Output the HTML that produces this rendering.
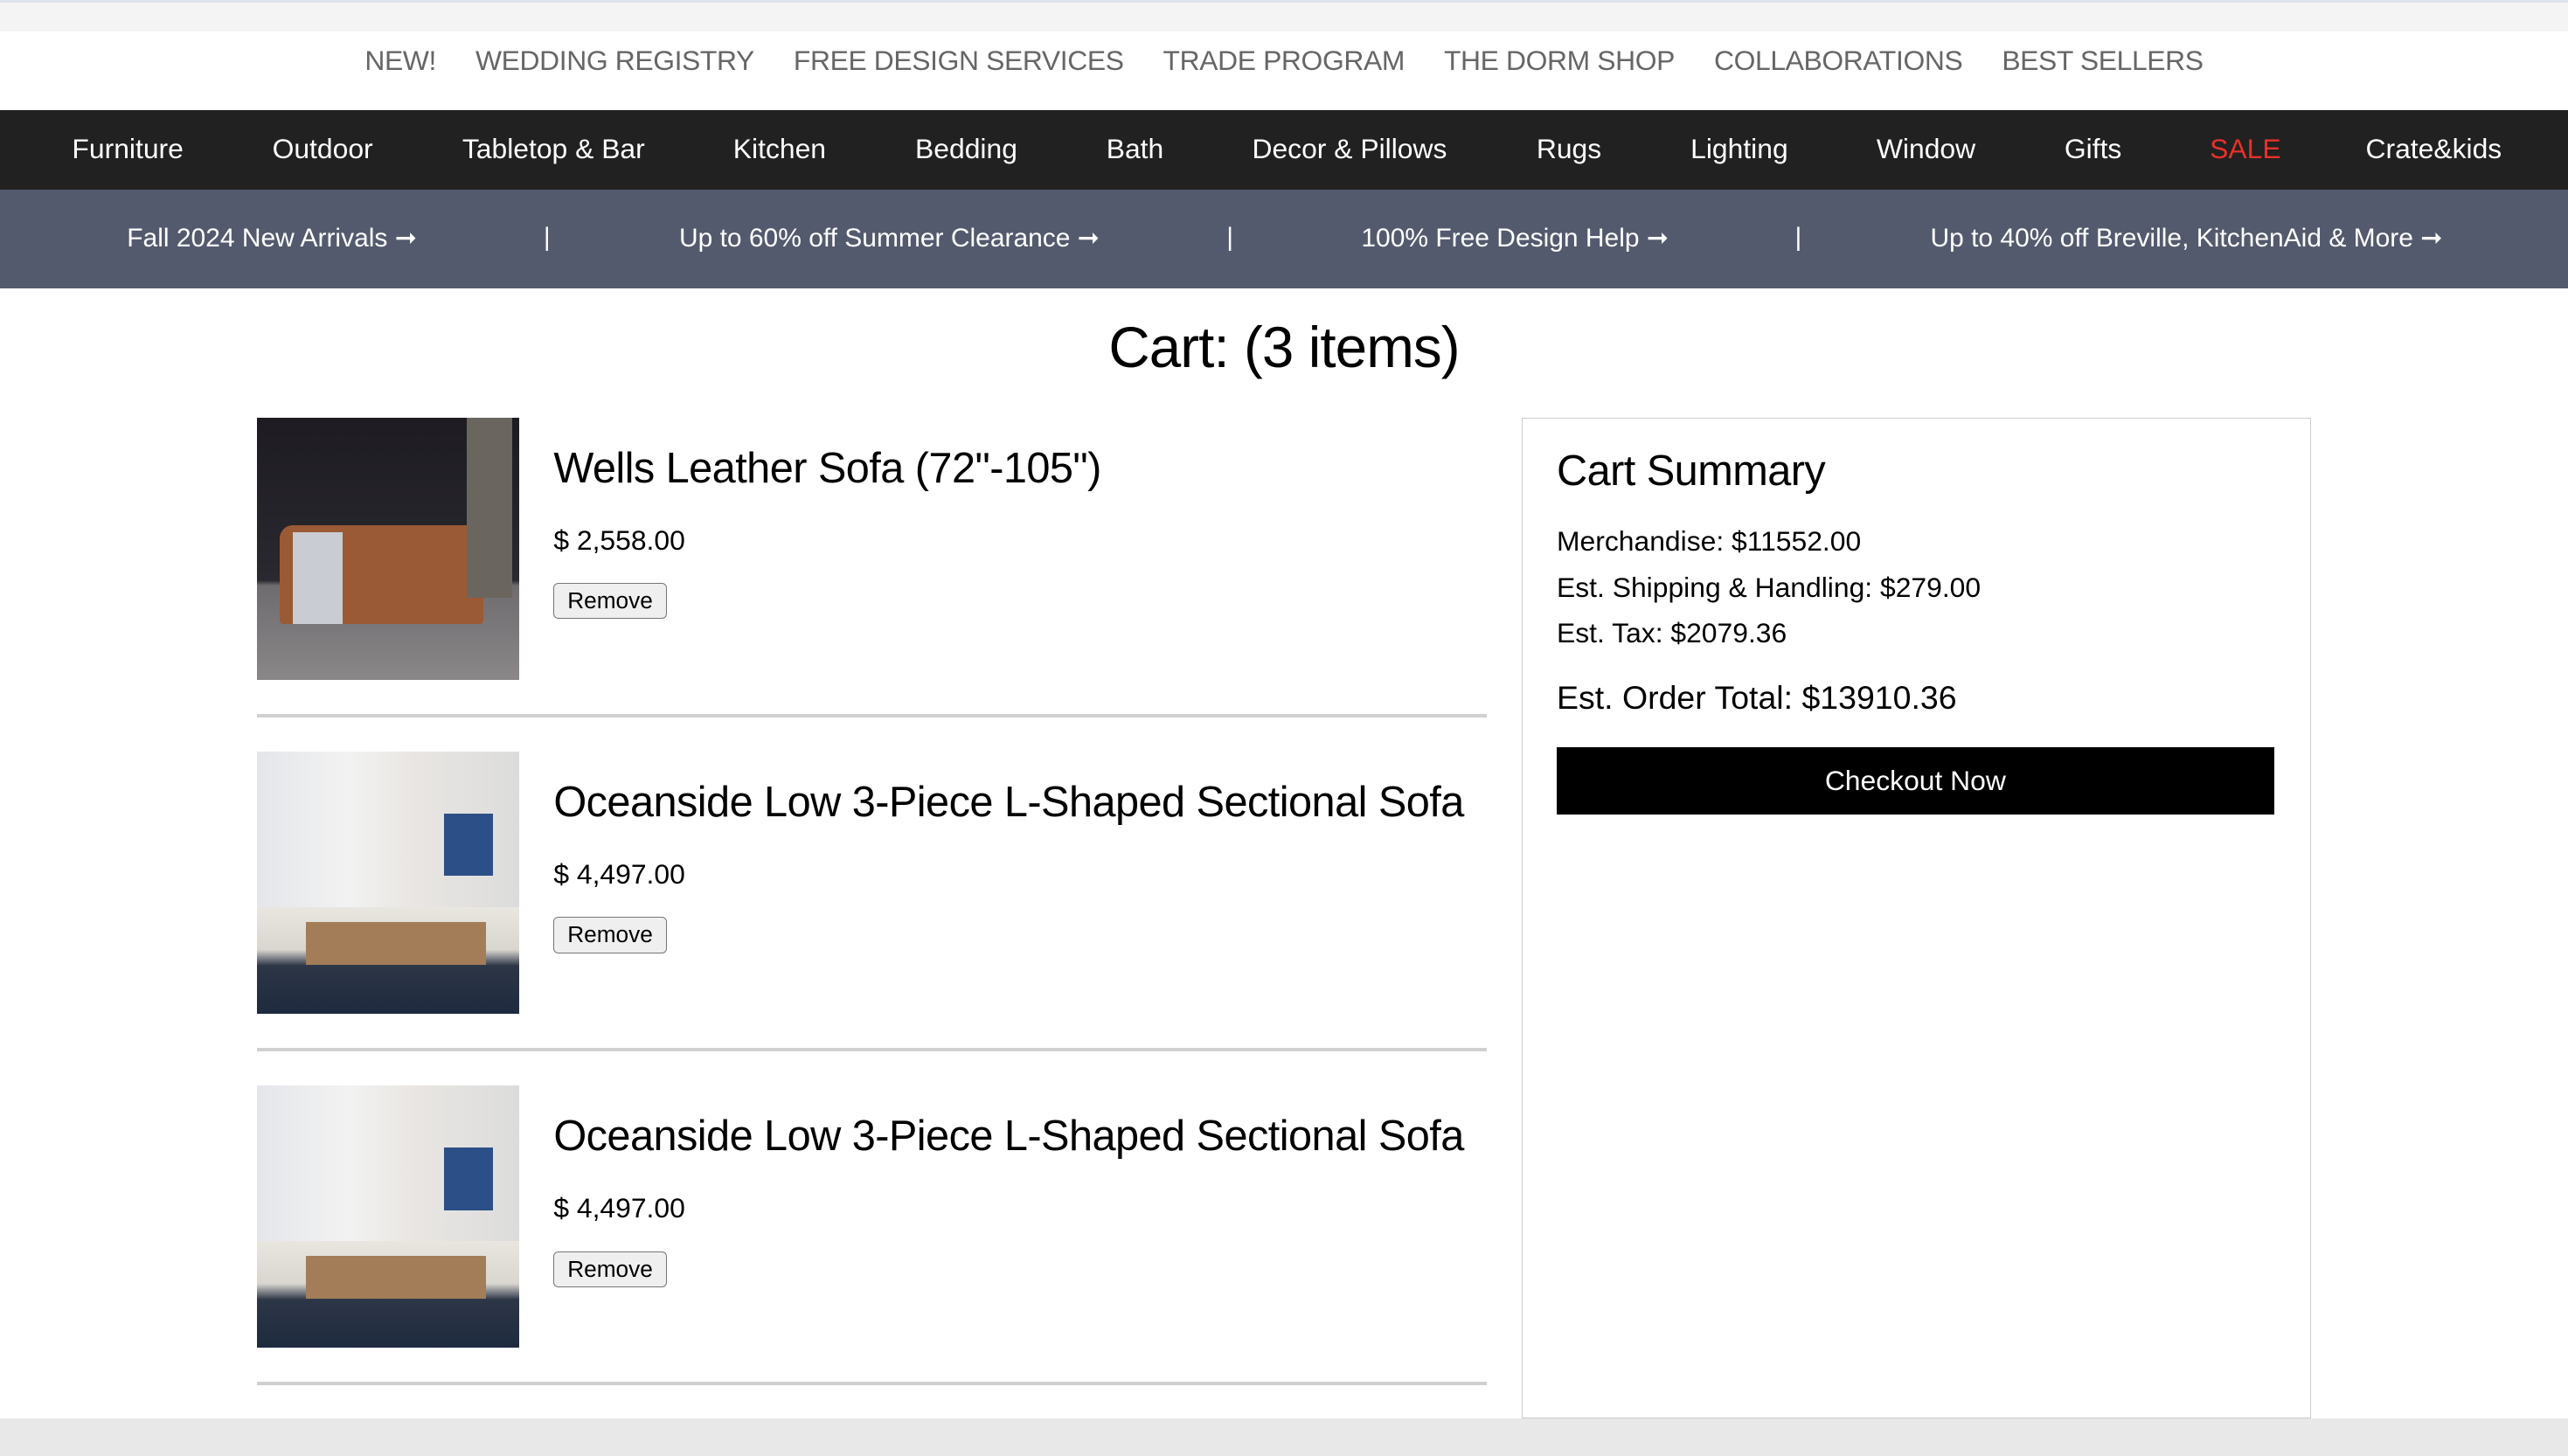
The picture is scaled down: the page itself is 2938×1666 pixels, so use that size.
<!DOCTYPE html>
<html><head><meta charset="utf-8"><style>
html,body{margin:0;padding:0;background:#fff;overflow:hidden}
body{width:2938px;height:1666px}
#w{zoom:1.87372;width:1568px;height:889px;position:relative;font-family:"Liberation Sans",Arial,sans-serif;color:#000}
.abs{position:absolute}
.top{top:0;left:0;width:1568px;height:19px;background:#f4f4f4;border-top:2px solid #dde3ea;box-sizing:border-box}
.util{top:13px;left:0;width:1568px;height:48px;display:flex;justify-content:center;align-items:center;gap:24px;font-size:17px;color:#666;letter-spacing:-0.2px}
.nav{top:67px;left:0;width:1568px;height:49px;background:#212121;color:#fff;font-size:17px}
.nav span{position:absolute;top:14px;transform:translateX(-50%);white-space:nowrap}
.promo{top:116px;left:0;width:1568px;height:60px;background:#545a6e;color:#fff;font-size:16px}
.promo span{position:absolute;top:20px;transform:translateX(-50%);white-space:nowrap}
h1{position:absolute;top:192px;left:0;width:1568px;text-align:center;margin:0;font-size:35px;font-weight:normal;letter-spacing:-0.5px}
.img{left:157px;width:160px;height:160px;overflow:hidden}
.t{left:338px;font-size:26px;letter-spacing:-0.3px;white-space:nowrap}
.p{left:338px;font-size:17px}
.btn{left:338px;width:68px;height:21px;border:1px solid #767676;border-radius:3px;background:#efefef;font-size:14px;text-align:center;line-height:21px}
.hr{left:157px;width:751px;height:2px;background:#d0d0d0}
.sum{left:929px;top:255px;width:481px;height:610px;border:1px solid #ccc}
.bot{left:0;top:866px;width:1568px;height:23px;background:#e8e8e8}
</style></head><body><div id="w">
<div class="abs top"></div>
<div class="abs util"><span>NEW!</span><span>WEDDING REGISTRY</span><span>FREE DESIGN SERVICES</span><span>TRADE PROGRAM</span><span>THE DORM SHOP</span><span>COLLABORATIONS</span><span>BEST SELLERS</span></div>
<div class="abs nav">
<span style="left:78px">Furniture</span><span style="left:197px">Outdoor</span><span style="left:338px">Tabletop &amp; Bar</span><span style="left:476px">Kitchen</span><span style="left:590px">Bedding</span><span style="left:693px">Bath</span><span style="left:824px">Decor &amp; Pillows</span><span style="left:958px">Rugs</span><span style="left:1062px">Lighting</span><span style="left:1176px">Window</span><span style="left:1278px">Gifts</span><span style="left:1371px;color:#e8312a">SALE</span><span style="left:1486px">Crate&amp;kids</span>
</div>
<div class="abs promo">
<span style="left:166px">Fall 2024 New Arrivals ➞</span><span style="left:334px">|</span><span style="left:543px">Up to 60% off Summer Clearance ➞</span><span style="left:751px">|</span><span style="left:925px">100% Free Design Help ➞</span><span style="left:1098px">|</span><span style="left:1335px">Up to 40% off Breville, KitchenAid &amp; More ➞</span>
</div>
<h1>Cart: (3 items)</h1>

<div class="abs img" style="top:255px;background:linear-gradient(180deg,#1e1c22 0%,#2a2830 62%,#6f6c70 64%,#8a8788 100%)">
<div class="abs" style="left:14px;top:66px;width:124px;height:60px;background:#9a5a35;border-radius:8px 8px 2px 2px"></div>
<div class="abs" style="left:22px;top:70px;width:30px;height:56px;background:#c9ccd2"></div>
<div class="abs" style="left:128px;top:0;width:28px;height:110px;background:#6b6560"></div>
</div>
<div class="abs t" style="top:271px">Wells Leather Sofa (72"-105")</div>
<div class="abs p" style="top:320px">$ 2,558.00</div>
<div class="abs btn" style="top:356px">Remove</div>
<div class="abs hr" style="top:436px"></div>

<div class="abs img" style="top:459px;background:linear-gradient(90deg,#e4e6ea 0%,#f2f2f2 35%,#e9e6e2 60%,#dcdcdc 100%)">
<div class="abs" style="left:114px;top:38px;width:30px;height:38px;background:#2b4f86"></div>
<div class="abs" style="left:0;top:95px;width:160px;height:65px;background:linear-gradient(180deg,#e9e6e0 0%,#d9d6d0 40%,#2d3647 55%,#1e2a3e 100%)"></div>
<div class="abs" style="left:30px;top:104px;width:110px;height:26px;background:#a27d58"></div>
</div>
<div class="abs t" style="top:475px">Oceanside Low 3-Piece L-Shaped Sectional Sofa</div>
<div class="abs p" style="top:524px">$ 4,497.00</div>
<div class="abs btn" style="top:560px">Remove</div>
<div class="abs hr" style="top:640px"></div>

<div class="abs img" style="top:663px;background:linear-gradient(90deg,#e4e6ea 0%,#f2f2f2 35%,#e9e6e2 60%,#dcdcdc 100%)">
<div class="abs" style="left:114px;top:38px;width:30px;height:38px;background:#2b4f86"></div>
<div class="abs" style="left:0;top:95px;width:160px;height:65px;background:linear-gradient(180deg,#e9e6e0 0%,#d9d6d0 40%,#2d3647 55%,#1e2a3e 100%)"></div>
<div class="abs" style="left:30px;top:104px;width:110px;height:26px;background:#a27d58"></div>
</div>
<div class="abs t" style="top:679px">Oceanside Low 3-Piece L-Shaped Sectional Sofa</div>
<div class="abs p" style="top:728px">$ 4,497.00</div>
<div class="abs btn" style="top:764px">Remove</div>
<div class="abs hr" style="top:844px"></div>

<div class="abs sum">
<div class="abs" style="left:21px;top:17px;font-size:26px;letter-spacing:-0.3px">Cart Summary</div>
<div class="abs" style="left:21px;top:61px;font-size:17px;line-height:28px">Merchandise: $11552.00<br>Est. Shipping &amp; Handling: $279.00<br>Est. Tax: $2079.36</div>
<div class="abs" style="left:21px;top:159px;font-size:20px">Est. Order Total: $13910.36</div>
<div class="abs" style="left:21px;top:201px;width:438px;height:41px;background:#000;color:#fff;font-size:17px;text-align:center;line-height:41px">Checkout Now</div>
</div>
<div class="abs bot"></div>
</div></body></html>
